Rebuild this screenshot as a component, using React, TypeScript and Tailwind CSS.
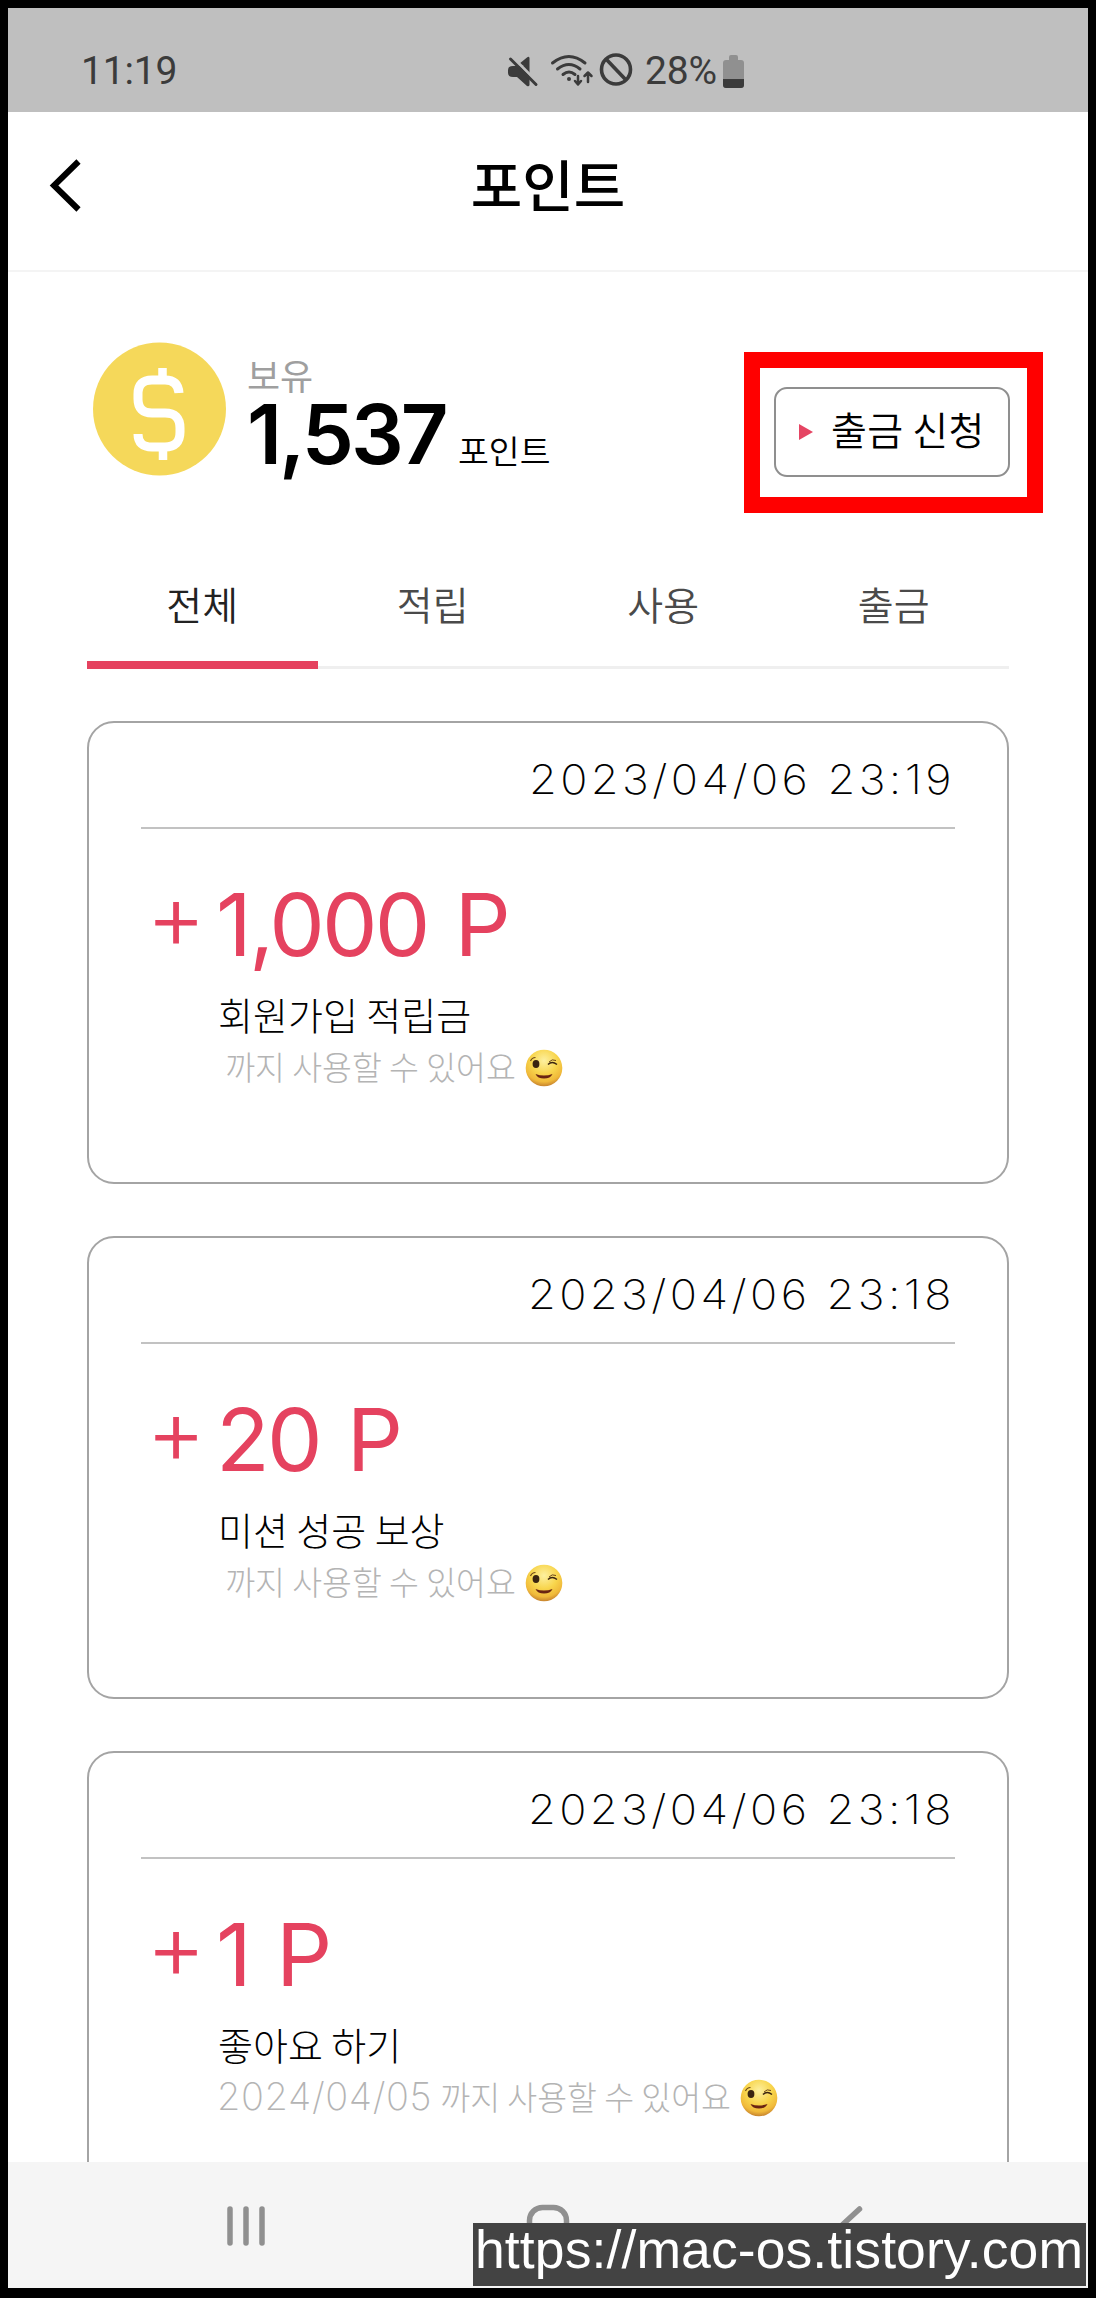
import { ReactNode } from "react";

interface PointEntry {
  date: string;
  amount: string;
  title: string;
  expires?: string;
}

const entries: PointEntry[] = [
  { date: "2023/04/06 23:19", amount: "1,000 P", title: "회원가입 적립금" },
  { date: "2023/04/06 23:18", amount: "20 P", title: "미션 성공 보상" },
  { date: "2023/04/06 23:18", amount: "1 P", title: "좋아요 하기", expires: "2024/04/05" },
];

const tabs = ["전체", "적립", "사용", "출금"];

const StatusBar = () => (
  <div className="h-[104px] shrink-0 bg-[#bfbfbf] font-['Roboto',sans-serif] text-[39px] leading-[48px] text-[#3b3b3b]">
    <div className="flex pt-[39px] pl-[73px]">
      <span className="w-[423px] tracking-[-0.2px]">11:19</span>
      <svg className="h-[46px] w-[134px]" viewBox="504 47 134 46" fill="none">
        <path d="M524 66 L513 66 Q508 66 508 70 V73 Q508 77 513 77 H517 L527 86 Q529 87 529.500 85 V58 Q529 56 527 57.500 L519 64 Z" fill="#3b3b3b" />
        <path d="M513 57.500 L539 84" stroke="#bfbfbf" strokeWidth="3" />
        <path d="M510.500 59 L536 84.500" stroke="#3b3b3b" strokeWidth="3" strokeLinecap="round" />
        <g stroke="#3b3b3b" strokeWidth="3" strokeLinecap="round" strokeLinejoin="round">
          <path d="M552.500 63 Q569 50 585 63" />
          <path d="M557.500 69 Q569 60 580 69" />
          <path d="M563 74.500 Q569 69.500 575 74.500" />
          <path d="M578 76 V84 M575 81 L578 84.500 L581 81 M588 82 V73 M584.500 76 L588 72.500 L591.500 76" strokeWidth="2.500" />
        </g>
        <circle cx="569" cy="79" r="2" fill="#3b3b3b" />
        <circle cx="616" cy="69.500" r="14.500" stroke="#3b3b3b" strokeWidth="3.600" />
        <path d="M606 59 L626 80" stroke="#3b3b3b" strokeWidth="3.600" />
      </svg>
      <span className="ml-[7px] w-[75px] tracking-[-0.2px]">28%</span>
      <svg className="h-[46px] w-[24px]" viewBox="720 47 24 46">
        <path d="M729 60 V57 Q729 55 731 55 H736 Q738 55 738 57 V60 H741 Q744 60 744 63 V85 Q744 88 741 88 H726 Q723 88 723 85 V63 Q723 60 726 60 Z" fill="#909090" />
        <path d="M723 79 H744 V85 Q744 88 741 88 H726 Q723 88 723 85 Z" fill="#3b3b3b" />
      </svg>
    </div>
  </div>
);

const Header = () => (
  <header className="relative h-[160px] shrink-0 border-b-2 border-[#f4f4f4] pt-[39px]">
    <h1 className="text-center text-[56px] leading-[64px] font-medium text-black">포인트</h1>
    <svg className="absolute top-[45px] left-[40px] h-[56px] w-[34px]" viewBox="0 0 34 56" fill="none">
      <path d="M30.500 4.500 L6 28.500 L30.500 52.500" stroke="black" strokeWidth="6" />
    </svg>
  </header>
);

const Coin = () => (
  <svg className="h-[134px] w-[134px]" viewBox="0 0 134 134" fill="none">
    <circle cx="67.500" cy="67" r="66.500" fill="#f5d85a" />
    <path
      d="M87 51 Q86 38 73 38 H60 Q46 38 46 52 V57 Q46 71 60 71 H73 Q88 71 88 86 V90 Q88 105 73 105 H60 Q46 105 46 92"
      stroke="white"
      strokeWidth="9"
    />
    <path d="M70.500 26 V36 M71 105 V118" stroke="white" strokeWidth="8.500" />
  </svg>
);

const WinkFace = () => (
  <svg className="mt-[3px] h-[38px] w-[38px]" viewBox="0 0 38 38" fill="none">
    <defs>
      <radialGradient id="face" cx="50%" cy="30%" r="72%">
        <stop offset="0" stopColor="#fdf0a0" />
        <stop offset="0.500" stopColor="#f8d54c" />
        <stop offset="0.800" stopColor="#f0b93a" />
        <stop offset="1" stopColor="#c07a2c" />
      </radialGradient>
    </defs>
    <circle cx="19" cy="19" r="18.300" fill="url(#face)" />
    <ellipse cx="11" cy="15" rx="3.400" ry="4" fill="#3a2410" />
    <path d="M5.500 12 Q7 8.500 10.500 8.500" stroke="#6b4517" strokeWidth="1.200" />
    <path d="M23 15.500 Q27 11.500 32 15.500" stroke="#3a2410" strokeWidth="1.500" />
    <path d="M24 13 Q27 9.500 31 11.500" stroke="#6b4517" strokeWidth="1" />
    <path d="M10.500 25 Q19 28 27.500 25 Q25.500 29.500 19 29.500 Q12.500 29.500 10.500 25 Z" fill="#6a2412" />
  </svg>
);

const Highlight = ({ children }: { children: ReactNode }) => (
  <div className="h-[161px] w-[299px] border-16 border-[#ff0000] pt-[20px] pl-[14px]">{children}</div>
);

const Summary = () => (
  <section className="flex h-[251px] shrink-0 pt-[70px] pl-[84px]">
    <Coin />
    <div className="ml-[21px] w-[497px] pt-[13px]">
      <p className="text-[36px] leading-[38px] font-normal text-[#9f9f9f]">보유</p>
      <p className="mt-[11px] flex items-baseline leading-[60px]">
        <span className="w-[211px] font-['Inter',sans-serif] text-[83px] font-semibold tracking-[-3px] text-black">1,537</span>
        <span className="text-[33.5px] font-[350] text-black">포인트</span>
      </p>
    </div>
    <div className="pt-[10px]">
      <Highlight>
        <button className="-mt-px flex h-[90px] w-[236px] items-center rounded-[13px] border-2 border-[#8f8f8f] pl-[23px] text-[39px] leading-[44px] font-[350] text-black">
          <svg className="h-[16px] w-[14px]" viewBox="0 0 14 16">
            <path d="M0 0 L14 8 L0 16 Z" fill="#e54563" />
          </svg>
          <span className="-mt-[8px] ml-[18px] tracking-[0.3px] whitespace-nowrap">출금 신청</span>
        </button>
      </Highlight>
    </div>
  </section>
);

const Tabs = () => (
  <nav className="mx-[79px] flex h-[146px] shrink-0 border-b-[3px] border-[#efefef] text-[39px] leading-[52px] font-[350]">
    {tabs.map((tab, i) => (
      <div
        key={tab}
        className={
          i === 0
            ? "-mb-[3px] flex-1 border-b-8 border-[#e5425f] pt-[54px] text-center text-[#222]"
            : "flex-1 pt-[54px] text-center text-[#4a4a4a]"
        }
      >
        {tab}
      </div>
    ))}
  </nav>
);

const EntryCard = ({ entry }: { entry: PointEntry }) => (
  <article className="h-[463px] shrink-0 rounded-[27px] border-2 border-[#a4a4a4] px-[52px] pt-[33px]">
    <p className="origin-right scale-x-110 text-right font-['Inter',sans-serif] text-[41px] leading-[46px] font-extralight tracking-[3.1px] whitespace-nowrap text-black">
      {entry.date}
    </p>
    <hr className="mt-[25px] border-t-2 border-[#c2c2c2]" />
    <div className="mt-[48px] flex h-[96px] items-center font-['Inter',sans-serif] leading-[96px] text-[#e5425f]">
      <span className="-mt-[19px] w-[75px] pl-[5px] text-[92px] font-light">+</span>
      <span className="origin-left scale-x-[1.025] text-[86px] font-normal tracking-[-2.8px] whitespace-nowrap [word-spacing:5px]">
        {entry.amount}
      </span>
    </div>
    <div className="ml-[77px]">
      <h2 className="mt-[21px] text-[38px] leading-[40px] font-light text-black">{entry.title}</h2>
      <p className="mt-[13px] -ml-px flex h-[38px] items-center text-[32.5px] leading-[38px] font-light whitespace-pre text-[#b4b4b4]">
        <span className="mr-px font-['Inter',sans-serif] text-[38px] font-extralight tracking-[0.6px]">{entry.expires}</span>
        <span className="mr-[9px]"> 까지 사용할 수 있어요</span>
        <WinkFace />
      </p>
    </div>
  </article>
);

const NavBar = () => (
  <footer className="h-[126px] shrink-0 bg-[#f5f5f5]">
    <svg className="h-[126px] w-full" viewBox="8 2162 1080 126" fill="none" stroke="#909090" strokeWidth="5.500" strokeLinecap="round">
      <path d="M230 2209 V2243 M246 2209 V2243 M262 2209 V2243" />
      <rect x="529.500" y="2207.500" width="37" height="37" rx="13" />
      <path d="M859.500 2209 L840 2227 L859.500 2245" />
    </svg>
  </footer>
);

const App = () => {
  return (
    <div className="relative flex h-[2298px] w-[1096px] flex-col overflow-hidden border-8 border-b-10 border-black bg-white font-['Noto_Sans_CJK_KR',sans-serif]">
      <StatusBar />
      <Header />
      <Summary />
      <Tabs />
      <main className="flex min-h-0 flex-1 flex-col gap-[52px] overflow-hidden px-[79px] pt-[52px]">
        {entries.map((entry) => (
          <EntryCard key={entry.title} entry={entry} />
        ))}
      </main>
      <NavBar />
      <div className="absolute right-[2px] bottom-[2px] h-[63px] w-[613px] bg-[#434343] pl-[2px] font-['Liberation_Sans',Arial,sans-serif] text-[53.5px] leading-[54px] tracking-[0.1px] whitespace-nowrap text-white">
        https://mac-os.tistory.com
      </div>
    </div>
  );
};

export default App;
